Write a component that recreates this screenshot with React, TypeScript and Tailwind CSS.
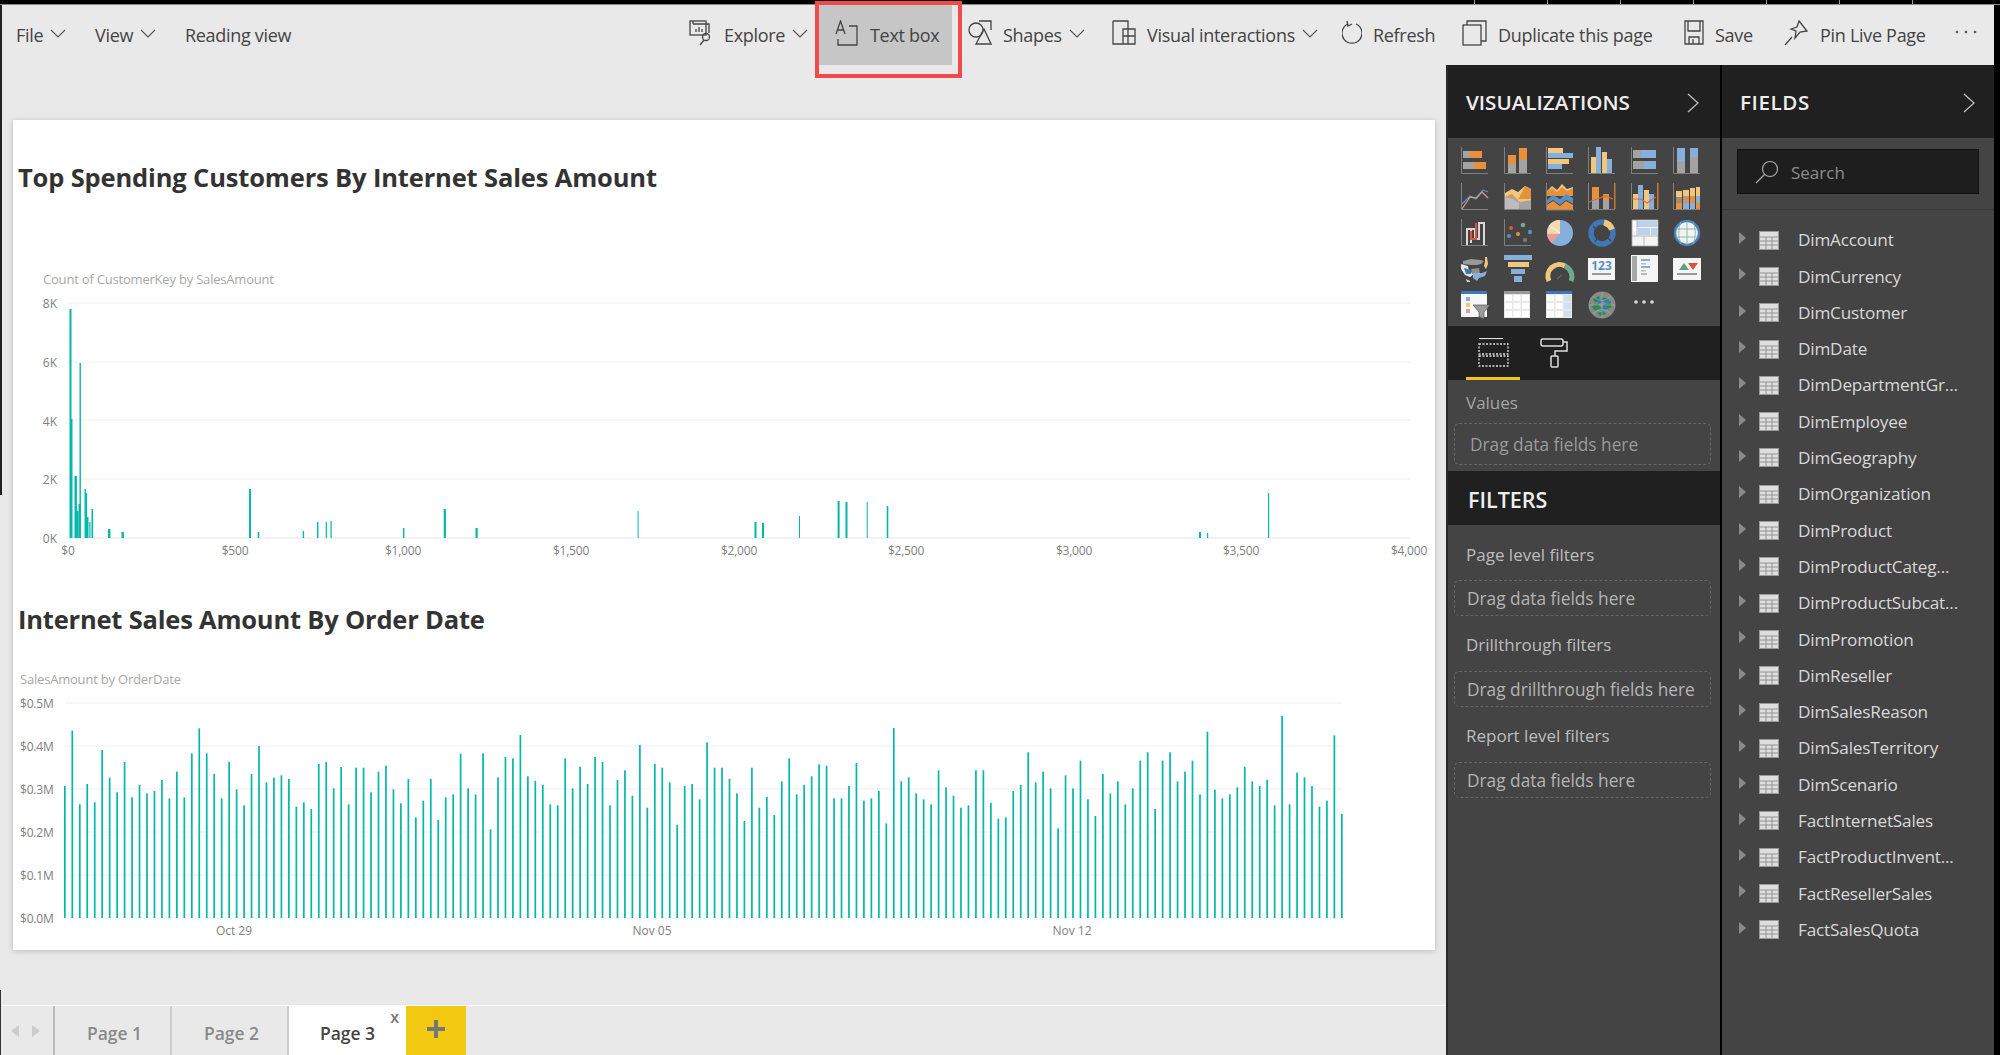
import type { ReactNode } from 'react';

const TEAL = '#01b8aa';
const OR = '#e8913c';
const GR = '#a3a3a3';
const BL = '#86afdc';
const TN = '#f0c77e';
const AX = '#808080';

// [x, top, width] read off the reference, page coordinates
const hist: [number, number, number][] = [
  [69.5, 309, 2], [70.5, 419, 2], [74.5, 476, 2.4], [76.5, 511, 2], [78.5, 504, 2], [79.5, 363, 1.4],
  [84.5, 489, 1.4], [85.5, 493, 1.6], [86.5, 517, 2], [89.3, 522, 1.2], [91.5, 509, 1.6], [108, 529, 2.4],
  [121.5, 532, 2.4], [249, 489, 2], [257.7, 532, 1.6], [302.7, 531, 1.4], [317, 522, 1.4], [325.7, 522, 1.2],
  [330.5, 521, 1.2], [403, 528, 1.4], [443.7, 509, 2.2], [475.5, 528, 2.2], [637.6, 511, 1], [754.5, 522, 2],
  [762, 523, 2], [799, 516, 1], [837.6, 501, 2], [845.5, 502, 2], [866.7, 502, 1], [886.7, 506, 1.6],
  [1199, 532, 2], [1207, 533, 1.2], [1268, 493, 1.2],
];

// tops of the daily bars, zoomed px, y = 660 + v / 3
const daily = [
  378, 212, 433, 372, 427, 270, 353, 397, 306, 412, 375, 400, 393, 360, 415, 335, 412, 280, 205, 280, 342, 415, 306, 388,
  436, 342, 258, 367, 353, 346, 357, 440, 427, 447, 312, 306, 385, 321, 433, 323, 323, 397, 335, 317, 388, 430, 357, 472,
  422, 357, 480, 412, 403, 281, 385, 403, 280, 508, 352, 291, 295, 225, 349, 363, 375, 433, 436, 295, 385, 320, 372, 291,
  306, 436, 360, 331, 407, 255, 443, 312, 323, 367, 494, 378, 372, 418, 247, 323, 323, 357, 400, 483, 323, 443, 411, 465,
  364, 295, 403, 375, 349, 313, 317, 415, 415, 378, 309, 422, 415, 393, 490, 204, 364, 352, 400, 418, 433, 331, 382, 407,
  443, 436, 331, 331, 429, 476, 472, 393, 375, 277, 367, 335, 385, 505, 346, 385, 302, 418, 468, 342, 400, 364, 433, 385,
  302, 277, 447, 302, 277, 364, 335, 302, 403, 215, 389, 415, 403, 382, 320, 364, 378, 360, 436, 168, 433, 338, 352, 378,
  440, 422, 226, 462,
];

const fields = [
  'DimAccount', 'DimCurrency', 'DimCustomer', 'DimDate', 'DimDepartmentGr...', 'DimEmployee', 'DimGeography',
  'DimOrganization', 'DimProduct', 'DimProductCateg...', 'DimProductSubcat...', 'DimPromotion', 'DimReseller',
  'DimSalesReason', 'DimSalesTerritory', 'DimScenario', 'FactInternetSales', 'FactProductInvent...', 'FactResellerSales',
  'FactSalesQuota',
];

function Chevron() {
  return (
    <svg width="16" height="9" viewBox="0 0 16 9" className="ml-[7px] mt-[-4px]" fill="none" stroke="#555" strokeWidth="1.1">
      <path d="M1 1l7 7 7-7" />
    </svg>
  );
}

function PanelArrow() {
  return (
    <svg width="12" height="20" viewBox="0 0 12 20" fill="none" stroke="#bdbdbd" strokeWidth="1.3">
      <path d="M1 1l10 9-10 9" />
    </svg>
  );
}

function ToolIcon({ w, children }: { w: number; children: ReactNode }) {
  return (
    <svg width={w} height="26" viewBox={`0 0 ${w} 26`} className="mr-[11px] mt-[-5px]" fill="none" stroke="#444" strokeWidth="1.3">
      {children}
    </svg>
  );
}

function R(x: number, y: number, w: number, h: number, fill: string) {
  return <rect x={x} y={y} width={w} height={h} fill={fill} />;
}

function Axis() {
  return <path d="M.5 0v26.5H27" fill="none" stroke={AX} strokeWidth="1" />;
}

function Dash({ y }: { y: number }) {
  return <rect x="1" y={y} width="29" height="10" fill="none" stroke="#ddd" strokeWidth="1.3" strokeDasharray="2 1.5" />;
}

const vizIcons: ReactNode[] = [
  <><Axis />{R(2, 4, 8, 7, GR)}{R(9, 4, 12, 7, OR)}{R(2, 15, 11, 7, GR)}{R(13, 15, 12, 7, OR)}</>,
  <><Axis />{R(4, 17, 8, 9, GR)}{R(4, 8, 8, 9, OR)}{R(15, 13, 8, 13, GR)}{R(15, 1, 8, 12, OR)}</>,
  <><Axis />{R(2, 1, 15, 5, TN)}{R(2, 6, 25, 5, BL)}{R(2, 12, 21, 5, TN)}{R(2, 17, 14, 5, BL)}</>,
  <><Axis />{R(3, 10, 5, 16, TN)}{R(8, 0, 5, 26, BL)}{R(14, 5, 5, 21, TN)}{R(19, 12, 5, 14, BL)}</>,
  <><Axis />{R(2, 3, 8, 8, GR)}{R(10, 3, 15, 8, BL)}{R(2, 14, 11, 8, GR)}{R(13, 14, 12, 8, BL)}</>,
  <><Axis />{R(4, 1, 8, 13, BL)}{R(4, 14, 8, 12, GR)}{R(17, 1, 8, 9, BL)}{R(17, 10, 8, 16, GR)}</>,

  <><Axis /><path d="M1 21l8-8 6 3 7-9 5 2" fill="none" stroke="#5c8bc0" strokeWidth="1.3" /><path d="M1 26l8-12 6 1 6-6 6 6" fill="none" stroke="#c99a85" strokeWidth="1.3" /></>,
  <><path d="M1 10l7-4 6 3 7-6 6 3v17H1z" fill={TN} /><path d="M1 14l7-3 6 6 7-14 6 3v10H14z" fill={OR} /><path d="M1 14l9 0 6 5 11-2v9H1z" fill={GR} /><path d="M1 26V14l8 2 6 4v6z" fill="#bcbcbc" /><path d="M.5 0v26.5H27" fill="none" stroke={AX} /></>,
  <><path d="M1 8l5-5 5 4 5-6 5 5 6-2v7H1z" fill={TN} /><path d="M1 8l5-3 5 4 5-5 5 4 6-3v8H1z" fill={OR} /><path d="M1 17l6-5 7 4 6-5 7 4v6l-7-4-6 5-7-5-6 4z" fill="#5b8dc8" /><path d="M1 22l6-4 7 5 6-5 7 4v5H1z" fill={OR} /><path d="M.5 0v27H28" fill="none" stroke={AX} /></>,
  <><Axis />{R(4, 4, 7, 22, OR)}{R(4, 16, 7, 10, GR)}{R(15, 11, 6, 15, OR)}{R(15, 17, 6, 9, GR)}<path d="M1 19l8-3 8-3 8 3" fill="none" stroke="#d9694a" strokeWidth="1.2" />{R(26, 0, 1.5, 26, '#c47a2c')}</>,
  <><Axis />{R(2, 11, 5, 15, TN)}{R(7, 2, 5, 24, BL)}{R(13, 7, 5, 19, TN)}{R(18, 11, 5, 15, BL)}<path d="M1 16l9 0 6 4 9-6" fill="none" stroke="#d9694a" strokeWidth="1.2" />{R(26, 0, 1.5, 26, '#c47a2c')}</>,
  <><Axis />{R(3, 8, 6, 6, TN)}{R(3, 14, 6, 6, '#a08d70')}{R(3, 20, 6, 6, OR)}{R(10, 7, 6, 6, TN)}{R(10, 13, 6, 7, '#c9946a')}{R(10, 20, 6, 6, BL)}{R(17, 5, 5, 8, TN)}{R(17, 13, 5, 7, OR)}{R(17, 20, 5, 6, BL)}{R(23, 4, 4, 9, TN)}{R(23, 13, 4, 7, BL)}{R(23, 20, 4, 6, OR)}</>,

  <><Axis /><path d="M6 26V10h4v14M10 10h4v10h4V4h5v22" fill="none" stroke="#d8d8d8" strokeWidth="2" /><path d="M10 12v8h5v-16" fill="none" stroke="#d9563b" strokeWidth="2" /></>,
  <><Axis /><circle cx="7" cy="9" r="2" fill="#d9563b" /><circle cx="19" cy="6" r="2.3" fill="#6fa98f" /><circle cx="26" cy="13" r="2.2" fill="#5b8dc8" /><circle cx="5" cy="17" r="2" fill="#5b8dc8" /><circle cx="14" cy="15" r="2" fill={OR} /><circle cx="21" cy="21" r="2.2" fill="#777" /></>,
  <><circle cx="14" cy="14" r="13" fill={BL} /><path d="M14 14L3 6.500A13 13 0 0 1 14 1z" fill="#f3d9ae" /><path d="M14 14L1 14A13 13 0 0 1 3 6.500z" fill="#f3d9ae" /><path d="M14 14L6 24A13 13 0 0 1 1 13z" fill="#e8a08e" /><path d="M14 14L3 6.500" stroke="#fff" strokeWidth=".8" /><path d="M14 14H1" stroke="#fff" strokeWidth=".8" /></>,
  <><circle cx="14" cy="14" r="11" fill="none" stroke="#3f76b5" strokeWidth="5.500" /><path d="M16 3.500a11 11 0 0 1 8 7" fill="none" stroke={TN} strokeWidth="6" /><path d="M5 7l3 3M23 22l-3-3M7 23l2-3" stroke="#444" strokeWidth="1.2" /></>,
  <>{R(1, 1, 26, 26, '#f4f4f4')}{R(6, 2, 20, 6, '#bcd2ec')}{R(2, 2, 3, 5, '#fff')}{R(2, 8, 4, 4, '#fff')}{R(7, 9, 12, 7, '#bcd2ec')}{R(20, 9, 6, 7, '#bcd2ec')}<path d="M1 17h26M13 17v10M1 1h26v26H1zM6 1v16" fill="none" stroke="#aaa" strokeWidth=".8" /></>,
  <><circle cx="14" cy="14" r="12" fill="#f2f2f2" stroke="#4a7fbd" strokeWidth="2.500" /><path d="M3 10h22M3 18h22M14 2v24M8 3c-3 7-3 15 0 22M20 3c3 7 3 15 0 22" fill="none" stroke="#7db8a4" strokeWidth=".9" /></>,

  <><path d="M2 6l8-2 9 1 4 1-3 3-4 1-6 0-8-1z" fill="#9a9a9a" /><path d="M0 9l7 2 1 5 5 3-4 3-5-2-4-6z" fill="#e6e6e6" /><path d="M3 13l7 2 0 4-5 0z" fill="#3f76b5" /><path d="M10 14l8-1 1 6-8 0z" fill="#8f8f8f" /><path d="M12 18l9 0 5-2-2 5-6 2-2 3-4-3z" fill={BL} /><path d="M24 2l2 0 1 7-2 5-2-3 1-4z" fill={TN} /><path d="M5 24l4 2 0 1-3 0z" fill="#ddd" /></>,
  <>{R(0, 0, 28, 5, BL)}{R(4, 7, 21, 5, TN)}{R(7, 14, 14, 5, BL)}{R(10, 21, 8, 6, BL)}</>,
  <><path d="M3 26a11.500 11.500 0 0 1 16-15" fill="none" stroke={TN} strokeWidth="5" /><path d="M19 11a11.500 11.500 0 0 1 6 15" fill="none" stroke="#6fa98f" strokeWidth="5" /><path d="M11 24l5-4" stroke="#666" strokeWidth="1.5" /></>,
  <>{R(0, 3, 27, 22, '#f5f5f5')}<text x="13.500" y="15" textAnchor="middle" fontSize="12" fontWeight="700" fill="#5b8dc8" fontFamily="'Open Sans',sans-serif">123</text>{R(4, 18, 19, 2, '#999')}</>,
  <>{R(0, 0, 27, 27, '#f5f5f5')}{R(1, 1, 5, 25, '#a8a8a8')}{R(10, 4, 9, 2, BL)}{R(10, 8, 5, 1.5, '#bbb')}{R(10, 11, 9, 2, BL)}{R(10, 15, 5, 1.5, '#bbb')}{R(10, 18, 6, 2, '#bbb')}</>,
  <>{R(0, 3, 28, 22, '#f5f5f5')}<path d="M6 15l5-7 5 7z" fill="#5f9f7d" /><path d="M15 8h10l-5 7z" fill="#d9563b" />{R(4, 18, 20, 2, '#999')}</>,

  <>{R(0, 0, 26, 26, '#f7f7f7')}{R(0, 0, 26, 3, '#3f76b5')}{R(5, 6, 4, 4, BL)}{R(5, 12, 4, 4, TN)}{R(5, 18, 4, 4, '#e8a08e')}<path d="M12 14h17l-6 7v7l-5-2v-5z" fill="#9a9a9a" stroke="#444" strokeWidth=".6" /></>,
  <>{R(0, 0, 26, 27, '#e8e8e8')}{R(0, 0, 26, 3, '#9a9a9a')}{[4, 12, 20].map(y => [1, 9.500, 18].map(x => <rect key={`${x}-${y}`} x={x} y={y} width="7" height="6" fill="#fff" />))}</>,
  <>{R(0, 0, 26, 27, '#e8e8e8')}{R(0, 0, 26, 3, '#3f76b5')}{[4, 12, 20].map(y => [1, 9.500, 18].map(x => <rect key={`${x}-${y}`} x={x} y={y} width="7" height="6" fill={x === 18 ? '#cfe0f3' : '#fff'} />))}</>,
  <><circle cx="14" cy="14" r="13.500" fill="#8a8a8a" /><path d="M5 8l6-3 1 4-5 3zM14 6l7 2-1 3-6-1zM3 15l7-2 3 4-6 3zM14 14l8-2 2 4-7 3zM9 22l7-2 2 3-6 2z" fill="#2c8c4e" /><path d="M9 10l5-2 1 3-5 2zM11 18l7-3 2 2-7 3zM17 9l6 1 0 2-6 0z" fill="#2b7bd0" /><path d="M1 14h26M14 1v26M5 5c5 6 13 6 18 0M5 23c5-6 13-6 18 0" fill="none" stroke="#bbb" strokeWidth=".5" /></>,
  <><circle cx="5" cy="11" r="1.800" fill="#ddd" /><circle cx="13" cy="11" r="1.800" fill="#ddd" /><circle cx="21" cy="11" r="1.800" fill="#ddd" /></>,
];

function DropBox({ text, tall }: { text: string; tall?: boolean }) {
  return (
    <div className={`ml-[6px] w-[257px] flex items-center rounded-[5px] border border-dashed border-[#666] pt-[2px] ${tall ? 'h-[42px] pl-[15px] text-[#9b9b9b]' : 'h-[36px] pl-[12px] text-[#b4b4b4]'} text-[17.300px]`}>
      {text}
    </div>
  );
}

export default function App() {
  return (
    <div className="relative w-[2000px] h-[1055px] flex flex-col overflow-hidden bg-black font-['Open_Sans',sans-serif]">
      {/* top strip */}
      <div className="h-[5px] shrink-0 bg-black border-b border-[#888]" />
      <div className="absolute top-0 left-[1474px] flex gap-[72px]">
        {[0, 1, 2, 3, 4, 5, 6].map(i => <div key={i} className="w-px h-[4px] bg-[#999]" />)}
      </div>

      {/* ribbon */}
      <div className="h-[60px] w-[1994px] shrink-0 flex items-center bg-[#e9e9e9] text-[18px] text-[#444] tracking-[-0.3px]">
        <div className="ml-[16px] w-[79px] flex items-center">File<Chevron /></div>
        <div className="w-[90px] flex items-center">View<Chevron /></div>
        <div className="w-[504px]">Reading view</div>
        <div className="w-[130px] flex items-center">
          <ToolIcon w={24}>
            <rect x="1" y="1" width="16" height="14" />
            <path d="M4 1V4M4 4h16v9M7 12V9M10 12V7M13 12V9" />
            <circle cx="17" cy="17" r="3.500" />
            <path d="M15 20l-4 5" />
          </ToolIcon>
          Explore<Chevron />
        </div>
        <div className="w-[133px] h-full pl-[16px] flex items-center bg-[#c6c6c6]">
          <ToolIcon w={24}>
            <path d="M1 14L5.500 1 10 14M2.500 10h6" />
            <path d="M14 6h8v19H3v-6" />
          </ToolIcon>
          Text box
        </div>
        <div className="w-[160px] pl-[16px] flex items-center">
          <ToolIcon w={24}>
            <circle cx="8" cy="10" r="7" />
            <path d="M11 1h12v9M16 9l7 15H8z" />
          </ToolIcon>
          Shapes<Chevron />
        </div>
        <div className="w-[230px] flex items-center">
          <ToolIcon w={24}>
            <path d="M1 1h15v8M1 1v23h10M11 9h12v15H11zM16 9v15M11 16h12" />
          </ToolIcon>
          Visual interactions<Chevron />
        </div>
        <div className="w-[120px] flex items-center">
          <ToolIcon w={20}>
            <path d="M6 4A10 10 0 1 0 14 4" />
            <path d="M5 1l1 5 4-2" />
          </ToolIcon>
          Refresh
        </div>
        <div className="w-[222px] flex items-center">
          <ToolIcon w={25}>
            <rect x="1" y="5" width="18" height="20" />
            <path d="M5 5V1h19v20h-5" />
          </ToolIcon>
          Duplicate this page
        </div>
        <div className="w-[100px] flex items-center">
          <ToolIcon w={20}>
            <path d="M1 1h18v23H1zM4 1v10h12V1M5 24v-7h10v7M9 19v5" />
          </ToolIcon>
          Save
        </div>
        <div className="w-[171px] flex items-center">
          <ToolIcon w={25}>
            <path d="M15 1l8 10-7 1-5 6 1-7-5-2 6-2zM8 17l-7 8" />
          </ToolIcon>
          Pin Live Page
        </div>
        <svg width="22" height="4" viewBox="0 0 22 4" className="mt-[-6px]" fill="#555">
          <circle cx="2" cy="2" r="1.300" />
          <circle cx="11" cy="2" r="1.300" />
          <circle cx="20" cy="2" r="1.300" />
        </svg>
      </div>

      {/* red annotation round Text box */}
      <div className="absolute left-[815px] top-[1px] w-[147px] h-[77px] border-[4px] border-[#f04a4a]" />

      <div className="flex-1 flex min-h-0">
        {/* report canvas */}
        <div className="w-[1446px] flex flex-col bg-[#e9e9e9]">
          <div className="flex-1 pt-[55px] pl-[13px]">
            <div className="w-[1422px] h-[830px] bg-white shadow-[0_1px_6px_rgba(0,0,0,0.2)]">
              <h2 className="mt-0 pt-[39px] pl-[5px] h-[75px] leading-[36px] text-[25.500px] font-bold text-[#333] tracking-[-0.15px]">Top Spending Customers By Internet Sales Amount</h2>
              <div className="mt-[75px] pl-[30px] h-[18px] leading-[18px] text-[13px] text-[#a8a8a8] tracking-[-0.2px]">Count of CustomerKey by SalesAmount</div>
              <svg width="1422" height="272" viewBox="13 288 1422 272" className="block">
                {[303, 362, 420, 479].map(y => <rect key={y} x="67" y={y - 0.5} width="1343" height="1" fill="#f0f0f0" />)}
                <rect x="67" y="537.500" width="1343" height="1" fill="#e6e6e6" />
                {hist.map(([x, top, w]) => <rect key={x} x={x} y={top} width={w} height={538 - top} fill={TEAL} />)}
                <g fontFamily="'Open Sans',sans-serif" fontSize="12" fill="#808080">
                  {[['8K', 303], ['6K', 362], ['4K', 421], ['2K', 479], ['0K', 538]].map(([t, y]) => (
                    <text key={t} x="57" y={Number(y) + 5} textAnchor="end">{t}</text>
                  ))}
                  {[['$0', 68], ['$500', 235], ['$1,000', 403], ['$1,500', 571], ['$2,000', 739], ['$2,500', 906], ['$3,000', 1074], ['$3,500', 1241], ['$4,000', 1409]].map(([t, x]) => (
                    <text key={t} x={x} y="555" textAnchor="middle" letterSpacing="-0.2">{t}</text>
                  ))}
                </g>
              </svg>
              <h2 className="mt-[41px] pl-[5px] h-[36px] leading-[36px] text-[25.500px] font-bold text-[#333] tracking-[-0.2px]">Internet Sales Amount By Order Date</h2>
              <div className="mt-[33px] pl-[7px] h-[18px] leading-[18px] text-[13px] text-[#a8a8a8] tracking-[-0.2px]">SalesAmount by OrderDate</div>
              <svg width="1422" height="252" viewBox="13 688 1422 252" className="block">
                {[703, 746, 789, 832, 875, 918].map(y => <rect key={y} x="65" y={y - 0.5} width="1277" height="1" fill="#f0f0f0" />)}
                {daily.map((v, i) => {
                  const top = 660 + v / 3;
                  return <rect key={i} x={64 + (i * 1277) / (daily.length - 1)} y={top} width="1.700" height={918 - top} fill={TEAL} />;
                })}
                <g fontFamily="'Open Sans',sans-serif" fontSize="12" fill="#808080">
                  {['$0.5M', '$0.4M', '$0.3M', '$0.2M', '$0.1M', '$0.0M'].map((t, i) => (
                    <text key={t} x="20" y={708 + i * 43} letterSpacing="-0.2">{t}</text>
                  ))}
                  {[['Oct 29', 234], ['Nov 05', 652], ['Nov 12', 1072]].map(([t, x]) => (
                    <text key={t} x={x} y="935" textAnchor="middle">{t}</text>
                  ))}
                </g>
              </svg>
            </div>
          </div>
          {/* page tabs */}
          <div className="h-[50px] flex border-t border-white text-[17.500px] font-semibold text-[#8a8a8a]">
            <div className="w-[55px] flex items-center gap-[13px] pl-[11px] border-r-2 border-[#bbb]">
              <svg width="8" height="12" viewBox="0 0 8 12"><path d="M8 0v12L0 6z" fill="#ccc" /></svg>
              <svg width="8" height="12" viewBox="0 0 8 12"><path d="M0 0v12l8-6z" fill="#ccc" /></svg>
            </div>
            <div className="w-[117px] flex items-center justify-center pt-[6px] pl-[4px] border-r-2 border-[#ccc]">Page 1</div>
            <div className="w-[117px] flex items-center justify-center pt-[6px] pl-[4px] border-r-2 border-[#ccc]">Page 2</div>
            <div className="relative w-[117px] flex items-center justify-center pt-[6px] bg-white text-[#444]">
              Page 3
              <span className="absolute top-[2px] right-[7px] text-[16px] leading-[18px] text-[#777]">x</span>
            </div>
            <div className="w-[60px] flex items-center justify-center bg-[#f2c811]">
              <svg width="18" height="18" viewBox="0 0 18 18" className="mt-[-4px]"><path d="M7 0h4v7h7v4h-7v7H7v-7H0V7h7z" fill="#777" /></svg>
            </div>
          </div>
        </div>

        {/* visualizations pane */}
        <div className="w-[275px] flex flex-col bg-[#444] border-l-2 border-[#2a2a2a] border-r border-r-black">
          <div className="h-[73px] flex items-center justify-between pt-[2px] pl-[18px] pr-[21px] bg-[#202020] text-[20.600px] font-semibold text-[#eee]">
            VISUALIZATIONS<PanelArrow />
          </div>
          <div className="h-[188px] pt-[5px] pl-[6px] grid grid-cols-[repeat(6,42.400px)] auto-rows-[36px]">
            {vizIcons.map((icon, i) => (
              <div key={i} className="flex items-center justify-center">
                <svg width="28" height="28" viewBox="0 0 28 28" className="overflow-visible">{icon}</svg>
              </div>
            ))}
          </div>
          <div className="relative h-[54px] flex items-start bg-[#202020]">
            <svg width="32" height="30" viewBox="0 0 32 30" className="ml-[30px] mt-[12px]">
              <path d="M1 .5h24" stroke="#ddd" strokeWidth="1.200" />
              <Dash y={6} />
              <Dash y={18} />
            </svg>
            <svg width="30" height="30" viewBox="0 0 30 30" className="ml-[30px] mt-[12px]" fill="none" stroke="#ddd" strokeWidth="1.500">
              <rect x="1" y="1" width="22" height="7" rx="2" />
              <path d="M23 4h4v9H15v5" />
              <rect x="11" y="18" width="7" height="11" rx="1" />
            </svg>
            <div className="absolute left-[18px] bottom-0 w-[54px] h-[3px] bg-[#f2c811]" />
          </div>
          <div className="h-[91px] pt-[11px]">
            <div className="pl-[18px] h-[24px] leading-[24px] text-[17px] text-[#a5a5a5]">Values</div>
            <div className="mt-[8px]"><DropBox text="Drag data fields here" tall /></div>
          </div>
          <div className="h-[54px] flex items-center pt-[5px] pl-[20px] bg-[#202020] text-[21.500px] font-semibold text-[#eee]">FILTERS</div>
          <div className="flex-1 pt-[18px] text-[17px] text-[#bdbdbd]">
            <div className="pl-[18px] h-[24px] leading-[24px]">Page level filters</div>
            <div className="mt-[13px]"><DropBox text="Drag data fields here" /></div>
            <div className="mt-[17px] pl-[18px] h-[24px] leading-[24px]">Drillthrough filters</div>
            <div className="mt-[14px]"><DropBox text="Drag drillthrough fields here" /></div>
            <div className="mt-[17px] pl-[18px] h-[24px] leading-[24px]">Report level filters</div>
            <div className="mt-[14px]"><DropBox text="Drag data fields here" /></div>
          </div>
        </div>

        {/* fields pane */}
        <div className="w-[273px] flex flex-col bg-[#444] border-l border-black">
          <div className="h-[73px] flex items-center justify-between pt-[2px] pl-[18px] pr-[19px] bg-[#202020] text-[20.600px] font-semibold text-[#eee] tracking-[0.6px]">
            FIELDS<PanelArrow />
          </div>
          <div className="h-[72px] pt-[11px] pl-[15px] border-b border-[#383838]">
            <div className="w-[242px] h-[45px] flex items-center pl-[17px] pt-[2px] bg-[#1e1e1e] border border-[#111] text-[17px] text-[#8c8c8c]">
              <svg width="24" height="24" viewBox="0 0 24 24" className="mr-[12px] mt-[-2px]" fill="none" stroke="#aaa" strokeWidth="1.200">
                <circle cx="15" cy="9" r="7.500" />
                <path d="M9.500 14.500L1 23" />
              </svg>
              Search
            </div>
          </div>
          <div className="pt-[12px] text-[17.200px] text-[#d8d8d8]">
            {fields.map(f => (
              <div key={f} className="h-[36.300px] flex items-center pl-[17px]">
                <svg width="7" height="12" viewBox="0 0 7 12" className="mt-[-4px]"><path d="M0 0v12l7-6z" fill="#8a8a8a" /></svg>
                <svg width="20" height="19" viewBox="0 0 20 19" className="ml-[13px] mr-[19px]">
                  <rect width="20" height="19" fill="#9a9a9a" />
                  <rect x="1" y="1" width="18" height="17" fill="#dedede" />
                  <path d="M1 6h18M1 10h18M1 14h18M7 6v12M13 6v12" stroke="#8a8a8a" strokeWidth=".9" />
                </svg>
                <span className="tracking-[-0.2px]">{f}</span>
              </div>
            ))}
          </div>
        </div>
        <div className="w-[6px] bg-black" />
      </div>

      {/* dark sliver on the screenshot's left edge */}
      <div className="absolute left-0 top-[5px] w-[2px] h-[490px] bg-[#222]" />
      <div className="absolute left-0 top-[990px] w-[1px] h-[65px] bg-[#333]" />
    </div>
  );
}
